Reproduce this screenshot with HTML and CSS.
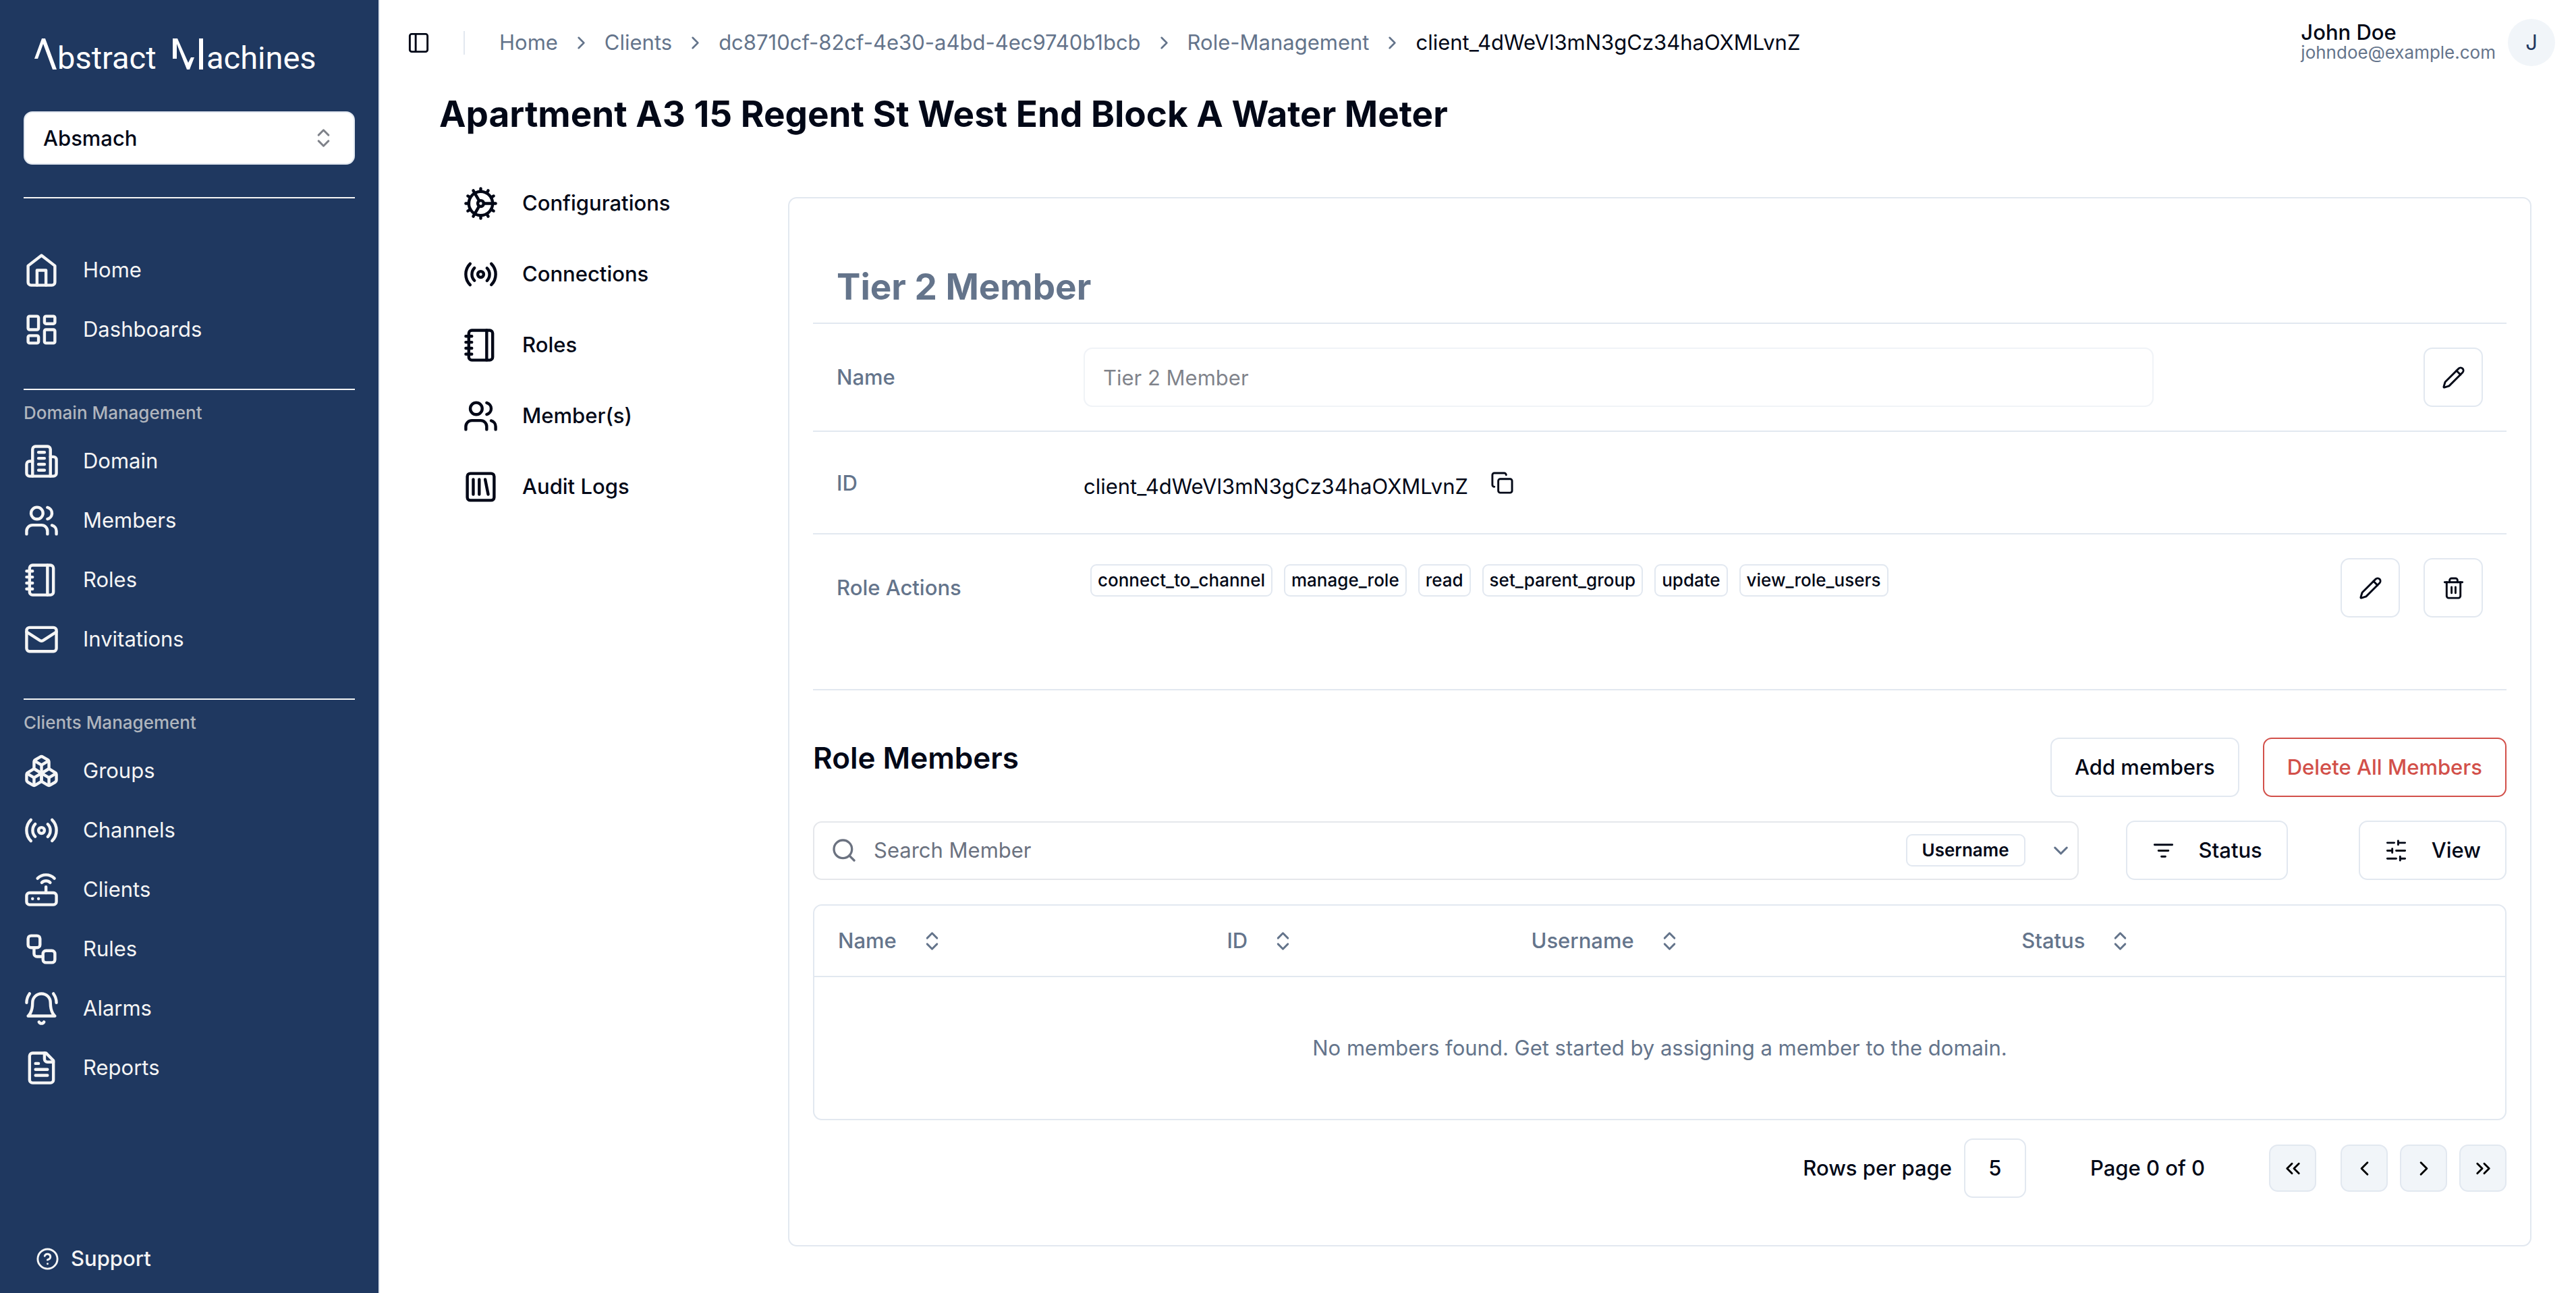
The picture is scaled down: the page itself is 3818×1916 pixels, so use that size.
FILE: index.html
```html
<!DOCTYPE html>
<html lang="en">
<head>
<meta charset="utf-8">
<meta name="viewport" content="width=device-width, initial-scale=1">
<title>Role | Abstract Machines</title>
<link rel="stylesheet" href="styles.css">
</head>
<body>
<svg class="sprite" aria-hidden="true">
  <symbol id="i-home" viewBox="0 0 24 24"><path d="m3 9 9-7 9 7v11a2 2 0 0 1-2 2H5a2 2 0 0 1-2-2z"/><path d="M9 22V12h6v10"/></symbol>
  <symbol id="i-dashboard" viewBox="0 0 24 24"><rect width="7" height="9" x="3" y="3" rx="1"/><rect width="7" height="5" x="14" y="3" rx="1"/><rect width="7" height="9" x="14" y="12" rx="1"/><rect width="7" height="5" x="3" y="16" rx="1"/></symbol>
  <symbol id="i-building" viewBox="0 0 24 24"><path d="M6 22V4a2 2 0 0 1 2-2h8a2 2 0 0 1 2 2v18Z"/><path d="M6 12H4a2 2 0 0 0-2 2v6a2 2 0 0 0 2 2h2"/><path d="M18 9h2a2 2 0 0 1 2 2v9a2 2 0 0 1-2 2h-2"/><path d="M10 6h4M10 10h4M10 14h4M10 18h4"/></symbol>
  <symbol id="i-users" viewBox="0 0 24 24"><path d="M16 21v-2a4 4 0 0 0-4-4H6a4 4 0 0 0-4 4v2"/><circle cx="9" cy="7" r="4"/><path d="M22 21v-2a4 4 0 0 0-3-3.87"/><path d="M16 3.13a4 4 0 0 1 0 7.75"/></symbol>
  <symbol id="i-notebook" viewBox="0 0 24 24"><path d="M2 6h4M2 10h4M2 14h4M2 18h4"/><rect width="16" height="20" x="4" y="2" rx="2"/><path d="M16 2v20"/></symbol>
  <symbol id="i-mail" viewBox="0 0 24 24"><rect width="20" height="16" x="2" y="4" rx="2"/><path d="m22 7-8.97 5.7a1.94 1.94 0 0 1-2.06 0L2 7"/></symbol>
  <symbol id="i-boxes" viewBox="0 0 24 24"><path d="M2.97 12.92A2 2 0 0 0 2 14.63v3.24a2 2 0 0 0 .97 1.71l3 1.8a2 2 0 0 0 2.06 0L12 19v-5.5l-5-3-4.03 2.42Z"/><path d="m7 16.5-4.74-2.85"/><path d="m7 16.5 5-3"/><path d="M7 16.5v5.17"/><path d="M12 13.5V19l3.97 2.38a2 2 0 0 0 2.06 0l3-1.8a2 2 0 0 0 .97-1.71v-3.24a2 2 0 0 0-.97-1.71L17 10.5l-5 3Z"/><path d="m17 16.5-5-3"/><path d="m17 16.5 4.74-2.85"/><path d="M17 16.5v5.17"/><path d="M7.97 4.42A2 2 0 0 0 7 6.13v4.37l5 3 5-3V6.13a2 2 0 0 0-.97-1.71l-3-1.8a2 2 0 0 0-2.06 0l-3 1.8Z"/><path d="M12 8 7.26 5.15"/><path d="m12 8 4.74-2.85"/><path d="M12 13.5V8"/></symbol>
  <symbol id="i-radio" viewBox="0 0 24 24"><path d="M4.9 19.1C1 15.2 1 8.8 4.9 4.9"/><path d="M7.8 16.2c-2.3-2.3-2.3-6.1 0-8.5"/><circle cx="12" cy="12" r="2"/><path d="M16.2 7.8c2.3 2.3 2.3 6.1 0 8.5"/><path d="M19.1 4.9C23 8.8 23 15.1 19.1 19"/></symbol>
  <symbol id="i-router" viewBox="0 0 24 24"><rect width="20" height="8" x="2" y="14" rx="2"/><path d="M6.01 18H6"/><path d="M10.01 18H10"/><path d="M15 10v4"/><path d="M17.84 7.17a4 4 0 0 0-5.66 0"/><path d="M20.66 4.34a8 8 0 0 0-11.31 0"/></symbol>
  <symbol id="i-workflow" viewBox="0 0 24 24"><rect width="8" height="8" x="3" y="3" rx="2"/><path d="M7 11v4a2 2 0 0 0 2 2h4"/><rect width="8" height="8" x="13" y="13" rx="2"/></symbol>
  <symbol id="i-bell" viewBox="0 0 24 24"><path d="M6 8a6 6 0 0 1 12 0c0 7 3 9 3 9H3s3-2 3-9"/><path d="M10.3 21a1.94 1.94 0 0 0 3.4 0"/><path d="M4 2C2.8 3.7 2 5.7 2 8"/><path d="M22 8c0-2.3-.8-4.3-2-6"/></symbol>
  <symbol id="i-file" viewBox="0 0 24 24"><path d="M15 2H6a2 2 0 0 0-2 2v16a2 2 0 0 0 2 2h12a2 2 0 0 0 2-2V7Z"/><path d="M14 2v4a2 2 0 0 0 2 2h4"/><path d="M10 9H8M16 13H8M16 17H8"/></symbol>
  <symbol id="i-help" viewBox="0 0 24 24"><circle cx="12" cy="12" r="10"/><path d="M9.09 9a3 3 0 0 1 5.83 1c0 2-3 3-3 3"/><path d="M12 17h.01"/></symbol>
  <symbol id="i-panel" viewBox="0 0 24 24"><rect width="18" height="18" x="3" y="3" rx="2"/><path d="M9 3v18"/></symbol>
  <symbol id="i-cog" viewBox="0 0 24 24"><path d="M12 20a8 8 0 1 0 0-16 8 8 0 0 0 0 16Z"/><path d="M12 14a2 2 0 1 0 0-4 2 2 0 0 0 0 4Z"/><path d="M12 2v2"/><path d="M12 22v-2"/><path d="m17 20.66-1-1.73"/><path d="M11 10.27 7 3.34"/><path d="m20.66 17-1.73-1"/><path d="m3.34 7 1.73 1"/><path d="M14 12h8"/><path d="M2 12h2"/><path d="m20.66 7-1.73 1"/><path d="m3.34 17 1.73-1"/><path d="m17 3.34-1 1.73"/><path d="m11 13.73-4 6.93"/></symbol>
  <symbol id="i-library" viewBox="0 0 24 24"><rect width="18" height="18" x="3" y="3" rx="2"/><path d="M7 7v10"/><path d="M11 7v10"/><path d="m15 7 2 10"/></symbol>
  <symbol id="i-pencil" viewBox="0 0 24 24"><path d="M21.174 6.812a1 1 0 0 0-3.986-3.987L3.842 16.174a2 2 0 0 0-.5.83l-1.321 4.352a.5.5 0 0 0 .623.622l4.353-1.32a2 2 0 0 0 .83-.497z"/><path d="m15 5 4 4"/></symbol>
  <symbol id="i-trash" viewBox="0 0 24 24"><path d="M3 6h18"/><path d="M19 6v14c0 1-1 2-2 2H7c-1 0-2-1-2-2V6"/><path d="M8 6V4c0-1 1-2 2-2h4c1 0 2 1 2 2v2"/><path d="M10 11v6M14 11v6"/></symbol>
  <symbol id="i-copy" viewBox="0 0 24 24"><rect width="14" height="14" x="8" y="8" rx="2"/><path d="M4 16c-1.1 0-2-.9-2-2V4c0-1.1.9-2 2-2h10c1.1 0 2 .9 2 2"/></symbol>
  <symbol id="i-search" viewBox="0 0 24 24"><circle cx="11" cy="11" r="8"/><path d="m21 21-4.3-4.3"/></symbol>
  <symbol id="i-filter" viewBox="0 0 24 24"><path d="M3 6h18M7 12h10M10 18h4"/></symbol>
  <symbol id="i-sliders" viewBox="0 0 24 24"><path d="M21 4h-7M10 4H3M21 12h-9M8 12H3M21 20h-5M12 20H3M14 2v4M8 10v4M16 18v4"/></symbol>
  <symbol id="i-updown" viewBox="0 0 24 24"><path d="m7 15 5 5 5-5"/><path d="m7 9 5-5 5 5"/></symbol>
  <symbol id="i-down" viewBox="0 0 24 24"><path d="m6 9 6 6 6-6"/></symbol>
  <symbol id="i-right" viewBox="0 0 24 24"><path d="m9 18 6-6-6-6"/></symbol>
  <symbol id="i-left" viewBox="0 0 24 24"><path d="m15 18-6-6 6-6"/></symbol>
  <symbol id="i-first" viewBox="0 0 24 24"><path d="m11 17-5-5 5-5"/><path d="m18 17-5-5 5-5"/></symbol>
  <symbol id="i-last" viewBox="0 0 24 24"><path d="m6 17 5-5-5-5"/><path d="m13 17 5-5-5-5"/></symbol>
</svg>

<div class="app">
  <aside class="sidebar">
    <a class="logo" href="#" aria-label="Abstract Machines">
      <svg class="logo-art" viewBox="0 0 420 60" role="img" aria-hidden="true">
        <path d="M0 34 11 4h5l17 46h-6L13 12 5 34z"/>
        <text x="34" y="49">bstract</text>
        <path d="M205 34V4h7l16 36 4-8h5l-7 18h-4L211 12v22zM244 4h6v46h-6z"/>
        <text x="255" y="49">achines</text>
      </svg>
    </a>
    <label class="picker">
      <select class="picker-select" aria-label="Workspace"><option>Absmach</option></select>
      <svg class="icon picker-icon"><use href="#i-updown"/></svg>
    </label>
    <nav class="nav" aria-label="Main">
      <section class="nav-group">
        <ul class="nav-list nav-list-first">
          <li><a class="nav-link" href="#"><svg class="icon icon-lg"><use href="#i-home"/></svg>Home</a></li>
          <li><a class="nav-link" href="#"><svg class="icon icon-lg"><use href="#i-dashboard"/></svg>Dashboards</a></li>
        </ul>
      </section>
      <section class="nav-group">
        <h2 class="nav-title">Domain Management</h2>
        <ul class="nav-list">
          <li><a class="nav-link" href="#"><svg class="icon icon-lg"><use href="#i-building"/></svg>Domain</a></li>
          <li><a class="nav-link" href="#"><svg class="icon icon-lg"><use href="#i-users"/></svg>Members</a></li>
          <li><a class="nav-link" href="#"><svg class="icon icon-lg"><use href="#i-notebook"/></svg>Roles</a></li>
          <li><a class="nav-link" href="#"><svg class="icon icon-lg"><use href="#i-mail"/></svg>Invitations</a></li>
        </ul>
      </section>
      <section class="nav-group">
        <h2 class="nav-title">Clients Management</h2>
        <ul class="nav-list">
          <li><a class="nav-link" href="#"><svg class="icon icon-lg"><use href="#i-boxes"/></svg>Groups</a></li>
          <li><a class="nav-link" href="#"><svg class="icon icon-lg"><use href="#i-radio"/></svg>Channels</a></li>
          <li><a class="nav-link" href="#"><svg class="icon icon-lg"><use href="#i-router"/></svg>Clients</a></li>
          <li><a class="nav-link" href="#"><svg class="icon icon-lg"><use href="#i-workflow"/></svg>Rules</a></li>
          <li><a class="nav-link" href="#"><svg class="icon icon-lg"><use href="#i-bell"/></svg>Alarms</a></li>
          <li><a class="nav-link" href="#"><svg class="icon icon-lg"><use href="#i-file"/></svg>Reports</a></li>
        </ul>
      </section>
    </nav>
    <a class="support" href="#"><svg class="icon"><use href="#i-help"/></svg>Support</a>
  </aside>

  <div class="main">
    <header class="topbar">
      <button class="bare" type="button" aria-label="Toggle sidebar"><svg class="icon"><use href="#i-panel"/></svg></button>
      <span class="topbar-rule"></span>
      <nav aria-label="Breadcrumb">
        <ol class="crumbs">
          <li><a href="#">Home</a></li>
          <li class="crumb-sep" aria-hidden="true"><svg class="icon icon-sm"><use href="#i-right"/></svg></li>
          <li><a href="#">Clients</a></li>
          <li class="crumb-sep" aria-hidden="true"><svg class="icon icon-sm"><use href="#i-right"/></svg></li>
          <li><a href="#">dc8710cf-82cf-4e30-a4bd-4ec9740b1bcb</a></li>
          <li class="crumb-sep" aria-hidden="true"><svg class="icon icon-sm"><use href="#i-right"/></svg></li>
          <li><a href="#">Role-Management</a></li>
          <li class="crumb-sep" aria-hidden="true"><svg class="icon icon-sm"><use href="#i-right"/></svg></li>
          <li class="crumb-current" aria-current="page">client_4dWeVl3mN3gCz34haOXMLvnZ</li>
        </ol>
      </nav>
      <div class="user">
        <div class="user-text">
          <span class="user-name">John Doe</span>
          <span class="user-mail">johndoe@example.com</span>
        </div>
        <button class="avatar" type="button" aria-label="Account">J</button>
      </div>
    </header>

    <main class="content">
      <h1 class="page-title">Apartment A3 15 Regent St West End Block A Water Meter</h1>
      <div class="columns">
        <nav aria-label="Client">
          <ul class="tabs">
            <li><a class="tab" href="#"><svg class="icon icon-lg"><use href="#i-cog"/></svg>Configurations</a></li>
            <li><a class="tab" href="#"><svg class="icon icon-lg"><use href="#i-radio"/></svg>Connections</a></li>
            <li><a class="tab" href="#"><svg class="icon icon-lg"><use href="#i-notebook"/></svg>Roles</a></li>
            <li><a class="tab" href="#"><svg class="icon icon-lg"><use href="#i-users"/></svg>Member(s)</a></li>
            <li><a class="tab" href="#"><svg class="icon icon-lg"><use href="#i-library"/></svg>Audit Logs</a></li>
          </ul>
        </nav>

        <article class="card">
          <h2 class="card-title">Tier 2 Member</h2>
          <div class="row">
            <label class="row-label" for="role-name">Name</label>
            <input class="field" id="role-name" type="text" value="Tier 2 Member" disabled>
            <div class="row-actions">
              <button class="btn btn-icon" type="button" aria-label="Edit name"><svg class="icon"><use href="#i-pencil"/></svg></button>
            </div>
          </div>
          <div class="row row-id">
            <span class="row-label">ID</span>
            <div class="id-value">
              <span>client_4dWeVl3mN3gCz34haOXMLvnZ</span>
              <button class="bare copy" type="button" aria-label="Copy ID"><svg class="icon"><use href="#i-copy"/></svg></button>
            </div>
          </div>
          <div class="row row-last">
            <span class="row-label">Role Actions</span>
            <ul class="badges">
              <li class="badge">connect_to_channel</li>
              <li class="badge">manage_role</li>
              <li class="badge">read</li>
              <li class="badge">set_parent_group</li>
              <li class="badge">update</li>
              <li class="badge">view_role_users</li>
            </ul>
            <div class="row-actions">
              <button class="btn btn-icon" type="button" aria-label="Edit actions"><svg class="icon"><use href="#i-pencil"/></svg></button>
              <button class="btn btn-icon" type="button" aria-label="Delete actions"><svg class="icon"><use href="#i-trash"/></svg></button>
            </div>
          </div>

          <section class="members">
            <div class="members-head">
              <h3 class="members-title">Role Members</h3>
              <button class="btn" type="button">Add members</button>
              <button class="btn btn-danger" type="button">Delete All Members</button>
            </div>
            <div class="toolbar">
              <div class="search">
                <svg class="icon icon-search"><use href="#i-search"/></svg>
                <input class="search-input" type="search" placeholder="Search Member" aria-label="Search Member">
                <label class="search-by">
                  <select class="search-select" aria-label="Search by"><option>Username</option></select>
                  <svg class="icon"><use href="#i-down"/></svg>
                </label>
              </div>
              <button class="btn btn-filter" type="button"><svg class="icon"><use href="#i-filter"/></svg>Status</button>
              <button class="btn btn-filter btn-view" type="button"><svg class="icon"><use href="#i-sliders"/></svg>View</button>
            </div>
            <div class="table-wrap">
              <table class="table">
                <colgroup><col class="col-name"><col class="col-id"><col class="col-user"><col class="col-status"></colgroup>
                <thead>
                  <tr>
                    <th scope="col"><button class="sort" type="button">Name<svg class="icon"><use href="#i-updown"/></svg></button></th>
                    <th scope="col"><button class="sort" type="button">ID<svg class="icon"><use href="#i-updown"/></svg></button></th>
                    <th scope="col"><button class="sort" type="button">Username<svg class="icon"><use href="#i-updown"/></svg></button></th>
                    <th scope="col"><button class="sort" type="button">Status<svg class="icon"><use href="#i-updown"/></svg></button></th>
                  </tr>
                </thead>
                <tbody>
                  <tr><td class="empty" colspan="4">No members found. Get started by assigning a member to the domain.</td></tr>
                </tbody>
              </table>
            </div>
            <div class="pager">
              <label for="rows">Rows per page</label>
              <select class="rows" id="rows"><option>5</option></select>
              <span class="pager-status">Page 0 of 0</span>
              <button class="page-btn page-first" type="button" aria-label="First page"><svg class="icon"><use href="#i-first"/></svg></button>
              <button class="page-btn" type="button" aria-label="Previous page"><svg class="icon"><use href="#i-left"/></svg></button>
              <button class="page-btn" type="button" aria-label="Next page"><svg class="icon"><use href="#i-right"/></svg></button>
              <button class="page-btn" type="button" aria-label="Last page"><svg class="icon"><use href="#i-last"/></svg></button>
            </div>
          </section>
        </article>
      </div>
    </main>
  </div>
</div>
</body>
</html>
```

FILE: styles.css
```css
:root {
  --navy: #1f3860;
  --ink: #020817;
  --muted: #64748b;
  --line: #e2e8f0;
  --soft: #f1f5f9;
  --pale: #f5f5f5;
  --danger: #d2504a;
  --radius: 13px;
}

*,
*::before,
*::after {
  box-sizing: border-box;
}

body {
  margin: 0;
  background: #fff;
  color: var(--ink);
  font: 400 31px/42px Inter, "Liberation Sans", sans-serif;
}

h1, h2, h3, ul, ol {
  margin: 0;
  padding: 0;
}

ul, ol {
  list-style: none;
}

a {
  color: inherit;
  text-decoration: none;
}

button, input, select {
  margin: 0;
  color: inherit;
  font: inherit;
}

select {
  appearance: none;
}

.sprite {
  display: none;
}

.icon {
  display: block;
  flex: none;
  width: 35px;
  height: 35px;
  fill: none;
  stroke: currentColor;
  stroke-width: 2;
  stroke-linecap: round;
  stroke-linejoin: round;
}

.icon-sm {
  width: 31px;
  height: 31px;
}

.icon-lg {
  width: 53px;
  height: 53px;
}

.app {
  display: flex;
  min-height: 100vh;
}

/* Sidebar */
.sidebar {
  display: flex;
  flex: none;
  flex-direction: column;
  width: 563px;
  padding: 53px 35px 31px;
  border-right: 2px solid var(--line);
  background: var(--navy);
  color: var(--pale);
}

.logo {
  padding-left: 16px;
}

.logo-art {
  display: block;
  width: 420px;
  height: 60px;
  fill: #fff;
  font: 400 47px Roboto, sans-serif;
}

.picker {
  position: relative;
  display: block;
  margin-top: 52px;
  color: var(--ink);
}

.picker-select {
  display: block;
  width: 100%;
  height: 79px;
  padding: 0 27px;
  border: 2px solid var(--line);
  border-radius: var(--radius);
  background: #fff;
  font-weight: 500;
}

.picker-icon {
  position: absolute;
  top: 22px;
  right: 29px;
  opacity: 0.5;
  pointer-events: none;
}

.nav {
  flex: 1;
  margin-top: 48px;
}

.nav-group {
  padding-bottom: 44px;
  border-top: 2px solid var(--pale);
}

.nav-title {
  padding-top: 17px;
  color: #b0b5bd;
  font-size: 26px;
  font-weight: 500;
  line-height: 34px;
}

.nav-list {
  padding-top: 10px;
}

.nav-list-first {
  padding-top: 62px;
}

.nav-link {
  display: flex;
  align-items: center;
  gap: 35px;
  height: 88px;
}

.support {
  display: flex;
  align-items: center;
  gap: 17px;
  padding-left: 18px;
  font-weight: 500;
}

/* Top bar */
.main {
  display: flex;
  flex: 1;
  flex-direction: column;
  min-width: 0;
}

.topbar {
  display: flex;
  align-items: center;
  height: 126px;
  padding: 0 31px 0 40px;
}

.bare {
  padding: 0;
  border: 0;
  background: none;
}

.topbar-rule {
  width: 2px;
  height: 35px;
  margin: 0 51px 0 49px;
  background: var(--line);
}

.crumbs {
  display: flex;
  align-items: center;
  gap: 19px;
  color: var(--muted);
}

.crumb-current {
  color: var(--ink);
}

.user {
  display: flex;
  align-items: center;
  gap: 18px;
  margin-left: auto;
}

.user-text {
  display: flex;
  flex-direction: column;
  line-height: 30px;
}

.user-name {
  font-weight: 500;
}

.user-mail {
  color: var(--muted);
  font-size: 26px;
}

.avatar {
  width: 70px;
  height: 70px;
  padding: 0;
  border: 0;
  border-radius: 50%;
  background: var(--soft);
  color: var(--navy);
}

/* Content */
.content {
  padding: 12px 66px 70px 88px;
}

.page-title {
  font-size: 53px;
  font-weight: 700;
  line-height: 62px;
}

.columns {
  display: grid;
  grid-template-columns: 482px minmax(0, 1fr);
  column-gap: 35px;
  align-items: start;
  margin-top: 57px;
}

.tabs {
  display: grid;
  row-gap: 17px;
}

.tab {
  display: flex;
  align-items: center;
  gap: 35px;
  height: 88px;
  padding-left: 35px;
  font-weight: 500;
}

.card {
  margin-top: 35px;
  padding: 35px 35px 70px;
  border: 2px solid var(--line);
  border-radius: var(--radius);
}

.card-title {
  padding: 65px 35px 22px;
  border-bottom: 2px solid var(--line);
  color: var(--muted);
  font-size: 53px;
  font-weight: 700;
  line-height: 62px;
}

.row {
  display: grid;
  grid-template-columns: 15% 65% 20%;
  align-items: center;
  padding: 35px;
  border-bottom: 2px solid var(--line);
}

.row-id {
  padding: 49px 35px 48px;
}

.row-last {
  padding-bottom: 106px;
}

.row-label {
  color: var(--muted);
  font-weight: 500;
}

.field {
  width: 100%;
  height: 88px;
  padding: 0 27px;
  border: 2px solid var(--line);
  border-radius: var(--radius);
  background: #fff;
  opacity: 0.5;
}

.row-actions {
  display: flex;
  justify-content: flex-end;
  gap: 35px;
}

.id-value {
  display: flex;
  align-items: flex-end;
  gap: 33px;
}

.copy {
  padding: 9px 0;
}

.badges {
  display: flex;
  flex-wrap: wrap;
  align-self: start;
  gap: 17px;
  padding: 9px 10px;
}

.badge {
  padding: 5px 9px;
  border: 2px solid var(--line);
  border-radius: 9px;
  font-size: 26px;
  font-weight: 500;
  line-height: 34px;
}

.btn {
  display: flex;
  align-items: center;
  justify-content: center;
  height: 88px;
  padding: 0 34px;
  border: 2px solid var(--line);
  border-radius: var(--radius);
  background: #fff;
  font-weight: 500;
}

.btn-icon {
  width: 88px;
  padding: 0;
}

.btn-danger {
  border-color: var(--danger);
  color: var(--danger);
}

.btn-filter {
  gap: 35px;
  padding: 0 36px;
}

.btn-view {
  margin-left: 35px;
}

/* Role members */
.members {
  margin-top: 70px;
}

.members-head {
  display: flex;
  align-items: flex-start;
  gap: 35px;
}

.members-title {
  margin-right: auto;
  font-size: 44px;
  font-weight: 600;
  line-height: 60px;
}

.toolbar {
  display: flex;
  align-items: center;
  gap: 70px;
  margin-top: 35px;
}

.search {
  display: flex;
  flex: 1;
  align-items: center;
  height: 87px;
  padding: 0 7px 0 24px;
  border: 2px solid #e5e7eb;
  border-radius: var(--radius);
  color: var(--muted);
}

.icon-search {
  width: 40px;
  height: 40px;
  color: #6b7280;
}

.search-input {
  flex: 1;
  min-width: 0;
  padding: 0 24px;
  border: 0;
  background: none;
}

.search-input::placeholder {
  color: #6b7280;
  opacity: 1;
}

.search-by {
  display: flex;
  align-items: center;
  gap: 35px;
}

.search-select {
  height: 48px;
  padding: 0 22px;
  border: 2px solid var(--line);
  border-radius: 9px;
  background: #fff;
  color: var(--ink);
  font-size: 26px;
  font-weight: 600;
  line-height: 34px;
}

.table-wrap {
  margin-top: 36px;
  border: 2px solid var(--line);
  border-radius: var(--radius);
}

.table {
  width: 100%;
  border-collapse: collapse;
  table-layout: fixed;
  color: var(--muted);
}

.col-name { width: 23%; }
.col-id { width: 18%; }
.col-user { width: 29%; }
.col-status { width: 30%; }

.table th {
  height: 105px;
  padding: 0 35px;
  border-bottom: 2px solid var(--line);
  text-align: left;
}

.sort {
  display: flex;
  align-items: center;
  gap: 35px;
  padding: 0;
  border: 0;
  background: none;
  font-weight: 500;
}

.table .empty {
  height: 211px;
  padding: 0 35px;
  text-align: center;
}

.pager {
  display: flex;
  align-items: center;
  justify-content: flex-end;
  gap: 18px;
  margin-top: 27px;
  font-weight: 500;
}

.rows {
  width: 92px;
  height: 88px;
  padding: 0;
  border: 2px solid var(--line);
  border-radius: var(--radius);
  background: #fff;
  text-align: center;
  text-align-last: center;
}

.pager-status {
  margin: 0 77px;
}

.page-btn {
  display: flex;
  align-items: center;
  justify-content: center;
  width: 70px;
  height: 70px;
  padding: 0;
  border: 2px solid var(--line);
  border-radius: var(--radius);
  background: var(--soft);
  color: #000;
}

.page-first {
  margin-right: 18px;
}
```
